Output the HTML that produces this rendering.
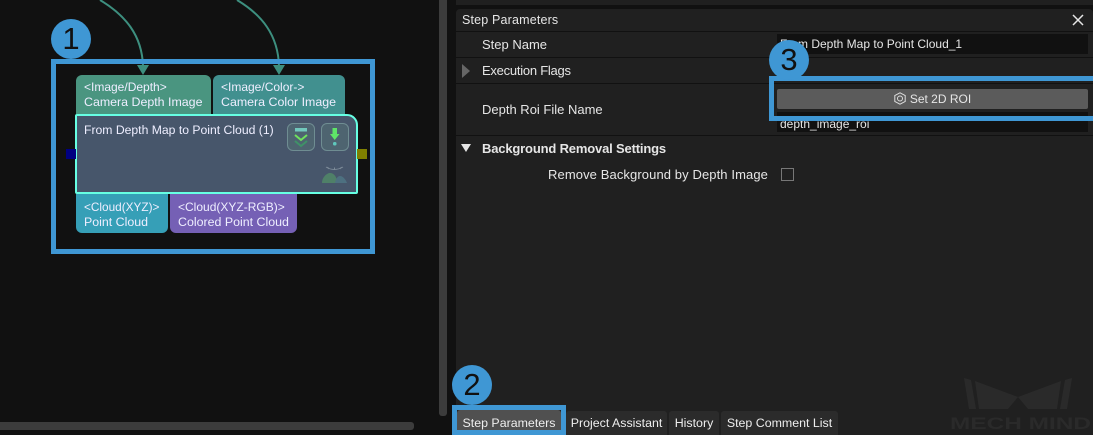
<!DOCTYPE html>
<html><head><meta charset="utf-8"><style>
html,body{margin:0;padding:0;background:#111;}
#r{position:relative;width:1093px;height:435px;overflow:hidden;background:#111;font-family:"Liberation Sans","Noto Sans CJK SC",sans-serif;font-size:12px;color:#e8e8e8;}
#r div{position:absolute;box-sizing:border-box;white-space:nowrap;}
.tag{color:#eef;font-size:12.4px;line-height:15px;padding:5px 0 0 8px;}
.lab{font-size:13px;line-height:16px;color:#e6e6e6;}
.ln{left:456px;width:637px;height:1px;background:#111;}
.inp{left:777px;width:311px;height:20px;background:#111;font-size:12px;line-height:20px;padding-left:3px;color:#e6e6e6;}
.tab{top:411px;height:24px;background:#2b2b2b;border-radius:3px 3px 0 0;font-size:12.4px;line-height:24px;text-align:center;color:#eee;}
.c{width:40px;height:40px;border-radius:50%;background:#3f97d4;color:#111;font-size:31px;line-height:40px;text-align:center;}
.bx{border:5px solid #3f97d4;}
.ib{width:28px;height:28px;border:1px solid #6f8d92;border-radius:6px;background:#4e6470;}
</style></head><body><div id="r">
<svg style="position:absolute;left:0;top:0" width="440" height="80">
<path d="M100 0C125 15 142 35 143 66" fill="none" stroke="#3d8f7f" stroke-width="2"/>
<path d="M237 0C262 15 278 35 279 66" fill="none" stroke="#3d8f7f" stroke-width="2"/>
<path d="M137 65H149L143 75Z" fill="#3d8f7f"/><path d="M273 65H285L279 75Z" fill="#3d8f7f"/>
</svg>
<div class="tag" style="left:76px;top:75px;width:135px;height:39px;background:#4a9580;border-radius:6px 6px 0 0"><span style="font-size:12px">&lt;Image/Depth&gt;</span><br>Camera Depth Image</div>
<div class="tag" style="left:213px;top:75px;width:132px;height:39px;background:#41908f;border-radius:6px 6px 0 0"><span style="font-size:12px">&lt;Image/Color-&gt;</span><br>Camera Color Image</div>
<div style="left:75px;top:114px;width:283px;height:80px;background:#47566b;border:2px solid #66ffe3;border-radius:2px 11px 2px 2px"></div>
<div style="left:84px;top:123px;font-size:12.2px;line-height:15px;color:#eef">From Depth Map to Point Cloud (1)</div>
<div class="ib" style="left:287px;top:123px"></div>
<div class="ib" style="left:321px;top:123px"></div>
<svg style="position:absolute;left:280px;top:120px" width="80" height="70">
<rect x="15" y="8" width="12" height="3.500" fill="#72c8bc"/>
<path d="M15 15L21 20L27 15" fill="none" stroke="#6fe35c" stroke-width="2"/>
<path d="M15 21L21 26L27 21" fill="none" stroke="#3f9268" stroke-width="2"/>
<path d="M52.500 8H57V14H59.500L54.700 20L50 14H52.500Z" fill="#5fe568"/><rect x="53" y="22" width="3.500" height="3.500" rx="1.500" fill="#5fc8bc"/>
<path d="M46 47Q54 52 63 47" fill="none" stroke="#7c8a98" stroke-width="1"/>
<path d="M49 49L47.500 47M54.500 50V47.500M60 49L61.500 47" stroke="#7c8a98" stroke-width="1"/>
<path d="M42 63C42 57 47 53 50 53C54 53 56 56 58 63Z" fill="#4f8068"/>
<path d="M55 63C56 58 58 56 60 56C63 56 66 60 67 63Z" fill="#4d7080"/>
</svg>
<div style="left:66px;top:149px;width:10px;height:10px;background:#000080"></div>
<div style="left:357px;top:149px;width:10px;height:10px;background:#808000"></div>
<div class="tag" style="left:76px;top:194px;width:92px;height:39px;background:#369fb7;border-radius:0 0 6px 6px;padding-top:6px"><span style="font-size:11.800px">&lt;Cloud(XYZ)&gt;</span><br>Point Cloud</div>
<div class="tag" style="left:170px;top:194px;width:127px;height:39px;background:#7560b5;border-radius:0 0 6px 6px;padding-top:6px"><span style="font-size:12px">&lt;Cloud(XYZ-RGB)&gt;</span><br>Colored Point Cloud</div>
<div class="bx" style="left:51px;top:59px;width:324px;height:195px"></div>
<div class="c" style="left:51px;top:19px">1</div>
<div style="left:0;top:422px;width:414px;height:8px;background:#3c3c3c;border-radius:0 3px 3px 0"></div>
<div style="left:439px;top:0;width:8px;height:416px;background:#3c3c3c;border-radius:0 0 3px 3px"></div>
<div style="left:456px;top:0;width:637px;height:5px;background:#202020"></div>
<div style="left:456px;top:9px;width:637px;height:426px;background:#202020;border-radius:4px 4px 0 0"></div>
<div class="lab" style="left:462px;top:12px;font-size:12.500px;letter-spacing:.17px">Step Parameters</div>
<svg style="position:absolute;left:1072px;top:14px" width="12" height="12"><path d="M1 1L11 11M11 1L1 11" stroke="#e6e6e6" stroke-width="1.500"/></svg>
<div class="ln" style="top:31px"></div><div class="ln" style="top:57px"></div><div class="ln" style="top:83px"></div><div class="ln" style="top:135px"></div>
<div class="lab" style="left:482px;top:37px">Step Name</div>
<div class="lab" style="left:482px;top:63px;letter-spacing:-.25px">Execution Flags</div>
<div class="lab" style="left:482px;top:102px">Depth Roi File Name</div>
<div class="lab" style="left:482px;top:141px;font-weight:bold;letter-spacing:-.17px">Background Removal Settings</div>
<div class="lab" style="left:548px;top:167px;letter-spacing:.1px">Remove Background by Depth Image</div>
<svg style="position:absolute;left:460px;top:62px" width="14" height="96">
<path d="M2 2L10 9L2 16Z" fill="#666"/><path d="M1 82H11L6 90Z" fill="#e6e6e6"/></svg>
<div style="left:781px;top:168px;width:13px;height:13px;border:1px solid #777"></div>
<div class="inp" style="top:34px">From Depth Map to Point Cloud_1</div>
<div class="inp" style="top:112px;line-height:24px">depth_image_roi</div>
<div style="left:777px;top:89px;width:311px;height:20px;background:#5b5b5b;border-radius:2px;text-align:center;font-size:12px;line-height:20px;color:#e6e6e6"><svg width="12" height="13" viewBox="0 0 12 13" style="vertical-align:-2px;margin-right:4px"><path d="M6 .8L11.200 3.500V9.500L6 12.200L.8 9.500V3.500Z" fill="none" stroke="#ddd"/><circle cx="6" cy="6.500" r="2.500" fill="none" stroke="#ddd"/></svg>Set 2D ROI</div>
<div class="bx" style="left:769px;top:76px;width:329px;height:45px"></div>
<div class="c" style="left:769px;top:40px">3</div>
<svg style="position:absolute;left:950px;top:365px" width="143" height="70">
<path d="M14 13L21 15L26 44H19ZM25 16L68 32L58 44H29ZM122 13L115 15L110 44H117ZM111 16L68 32L78 44H107Z" fill="#2a2a2a"/>
<text x="0" y="64" font-family="Liberation Sans" font-weight="bold" font-size="17" textLength="141" lengthAdjust="spacingAndGlyphs" fill="#2a2a2a">MECH MIND</text>
</svg>
<div class="tab" style="left:566px;width:101px">Project Assistant</div>
<div class="tab" style="left:669px;width:50px">History</div>
<div class="tab" style="left:721px;width:117px">Step Comment List</div>
<div class="tab" style="left:457px;top:410px;width:104px;height:20px;background:#505050;line-height:26px;overflow:hidden">Step Parameters</div>
<div class="bx" style="left:452px;top:405px;width:114px;height:30px"></div>
<div class="c" style="left:452px;top:365px">2</div>
</div></body></html>
